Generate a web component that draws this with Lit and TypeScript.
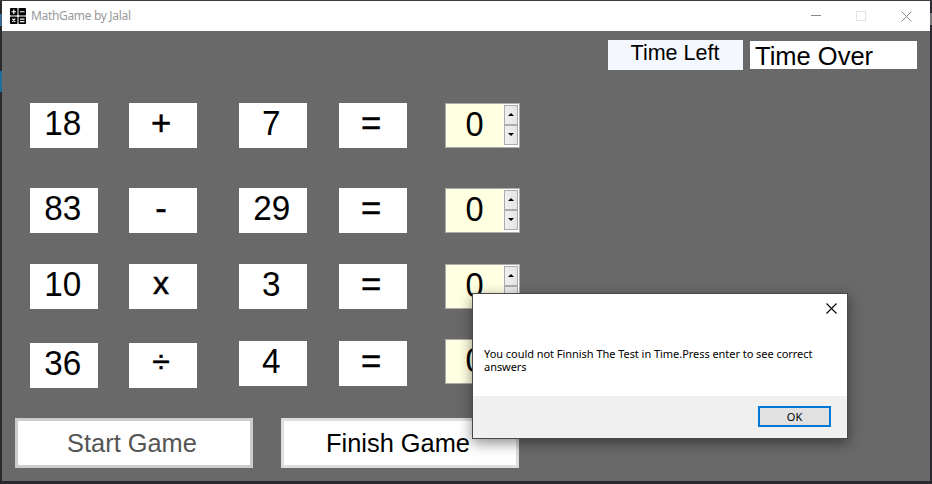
import { LitElement, html, css, svg } from "lit";
import { customElement, property } from "lit/decorators.js";

@customElement("spin-box")
class SpinBox extends LitElement {
  @property({ type: Number }) value = 0;
  static styles = css`
    :host { display: flex; box-sizing: border-box; width: 75px; height: 45px; background: #ffffe1; border: 1px solid #acacac; }
    .value { flex: 1; text-align: center; font: 34.67px/41px "Liberation Sans", Arial, sans-serif; color: #000; transform: scaleX(0.94); }
    .steps { display: flex; flex-direction: column; width: 14px; padding: 1px 1px 2px; background: #fff; }
    .step { flex: 1; display: flex; align-items: center; justify-content: center; border: 1px solid #acacac; background: linear-gradient(to right, #f0f0f0, #e5e5e5); }
    svg { display: block; margin: 0 1px 1px 0; }
  `;
  render() {
    return html`<div class="value">${this.value}</div>
      <div class="steps">
        <div class="step"><svg width="6" height="3"><path d="M0 3L3 0L6 3Z" /></svg></div>
        <div class="step"><svg width="6" height="3"><path d="M0 0L3 3L6 0Z" /></svg></div>
      </div>`;
  }
}

@customElement("message-box")
class MessageBox extends LitElement {
  static styles = css`
    :host { display: flex; flex-direction: column; box-sizing: border-box; width: 376px; height: 146px; border: 1px solid #484848; background: #fff; color: #000; font: 11px/13px "Noto Sans", "Open Sans", sans-serif; box-shadow: 0 4px 13px rgba(0, 0, 0, 0.45); }
    .top { display: flex; justify-content: flex-end; height: 53px; padding: 9px 10px 0 0; box-sizing: border-box; }
    .text { flex: 1; padding-left: 11px; white-space: pre; letter-spacing: -0.045px; }
    .text span { display: block; width: max-content; }
    .foot { display: flex; justify-content: flex-end; height: 42px; padding: 10px 16px 0 0; box-sizing: border-box; background: #f0f0f0; }
    .ok { box-sizing: border-box; width: 73px; height: 21px; padding: 0; border: 2px solid #0078d7; background: #e1e1e1; font: inherit; line-height: 17px; color: #000; }
  `;
  render() {
    return html`<div class="top"><svg width="11" height="11"><path d="M.5 .5L10.5 10.5M10.5 .5L.5 10.5" stroke="#000" stroke-width="1.1" /></svg></div>
      <div class="text"><span>You could not Finnish The Test in Time.Press enter to see correct</span><span>answers</span></div>
      <div class="foot"><button class="ok">OK</button></div>`;
  }
}

const problems = [
  { a: 18, op: "+", b: 7, cls: "r1" },
  { a: 83, op: "-", b: 29, cls: "r2" },
  { a: 10, op: "x", b: 3, cls: "r3" },
  { a: 36, op: "÷", b: 4, cls: "r4" },
];

@customElement("app-root")
class AppRoot extends LitElement {
  static styles = css`
    :host { display: block; box-sizing: border-box; position: relative; width: 932px; height: 484px; padding: 1px 2px 3px; overflow: hidden; background: linear-gradient(#1c6f9e, #1c6f9e) 0 71px / 2px 21px no-repeat, linear-gradient(#3f6690, #3f6690) 0 14px / 2px 12px no-repeat, linear-gradient(#77777a, #77777a) 930px 13px / 2px 12px no-repeat, linear-gradient(#3f3a42, #3f3a42) 0 0 / 100% 1px no-repeat, #29292e; font-family: "Liberation Sans", Arial, sans-serif; color: #000; }
    .window { display: flex; flex-direction: column; height: 480px; background: #696969; }
    .title { display: flex; align-items: center; box-sizing: border-box; height: 30px; padding: 0 18px 0 8px; background: #fff; }
    .title svg { display: block; }
    .name { margin-left: 5px; flex: 1; font: 12px/16px "Noto Sans", "Open Sans", sans-serif; letter-spacing: -0.33px; color: #999; }
    .name span { display: inline-block; }
    .controls { display: flex; align-items: center; gap: 35px; }
    .timer { display: flex; justify-content: flex-end; gap: 7px; height: 30px; margin: 9px 13px 0 0; }
    .label { box-sizing: border-box; width: 135px; padding-right: 1px; background: #f4f7fd; text-align: center; font-size: 21.5px; line-height: 27px; }
    .left { width: 162px; height: 28px; margin-top: 1px; padding-left: 5px; background: #fff; font-size: 25.5px; line-height: 31px; }
    .problems { display: grid; grid-template-rows: 85px 76px 75px 79px; margin: 33px 0 0 28px; }
    .row { display: grid; grid-template-columns: 99px 110px 100px 106px 75px; align-items: start; }
    .cell { box-sizing: border-box; width: 68px; height: 45px; padding-right: 4px; background: #fff; text-align: center; font-size: 34.67px; line-height: 41px; }
    .a span, .b span { display: inline-block; transform: translateX(0.5px) scaleX(0.96); }
    .op, .eq { -webkit-text-stroke: 0.5px #000; }
    .r3 .op, .r4 .op { font-size: 32px; line-height: 38px; }
    .r4 .op { line-height: 36px; }
    .r4 .a, .r4 .op { margin-top: 4px; }
    .r4 .b, .r4 .eq { margin-top: 2px; }
    .actions { display: flex; gap: 28px; margin-left: 13px; }
    .actions button { box-sizing: border-box; width: 238px; height: 50px; padding: 0 4px 0 0; border: 3px solid #ccc; background: #fff; font: 25.4px/44px "Liberation Sans", Arial, sans-serif; color: #555; }
    .actions .finish { border-color: #ddd; color: #000; }
    message-box { position: absolute; left: 472px; top: 293px; }
  `;
  render() {
    return html`
      <div class="window">
        <div class="title">
          <svg width="16" height="16">
            ${[[0, 0], [8.5, 0], [0, 8.5], [8.5, 8.5]].map(([x, y]) => svg`<rect x=${x} y=${y} width="7.5" height="7.5" rx=".8" fill="#000" />`)}
            <path d="M1.5 3.75H6M3.75 1.5V6M10 3.75H14.5M2.2 10.7L5.3 13.8M5.3 10.7L2.2 13.8M10 11.2H14.5M10 13.6H14.5" stroke="#fff" stroke-width="1.2" />
          </svg>
          <div class="name"><span>MathGame by Jalal</span></div>
          <div class="controls">
            <svg width="10" height="10"><path d="M0 4.5H10" stroke="#888" /></svg>
            <svg width="10" height="10"><rect x=".5" y=".5" width="9" height="9" fill="none" stroke="#e2e2e2" /></svg>
            <svg width="11" height="11"><path d="M.5 .5L10.5 10.5M10.5 .5L.5 10.5" stroke="#888" /></svg>
          </div>
        </div>
        <div class="timer"><div class="label">Time Left</div><div class="left">Time Over</div></div>
        <div class="problems">
          ${problems.map((p) => html`<div class="row ${p.cls}">
            <div class="cell a"><span>${p.a}</span></div><div class="cell op">${p.op}</div><div class="cell b"><span>${p.b}</span></div><div class="cell eq">=</div>
            <spin-box .value=${0}></spin-box>
          </div>`)}
        </div>
        <div class="actions"><button>Start Game</button><button class="finish">Finish Game</button></div>
      </div>
      <message-box></message-box>`;
  }
}
